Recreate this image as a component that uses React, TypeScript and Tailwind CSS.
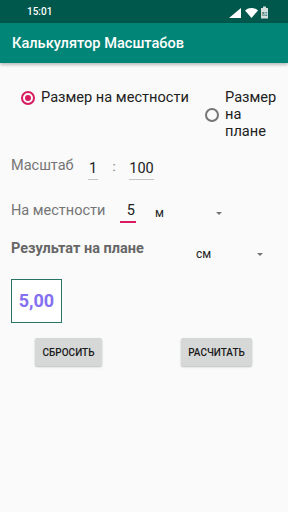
export default function App() {
  return (
    <div className="w-[288px] h-[512px] bg-[#fafafa] overflow-hidden font-['Roboto','Noto_Sans',sans-serif]">
      <div className="h-[23px] bg-[#00574b] flex items-center pl-[27px] pr-[19px]">
        <span className="text-[10px] font-medium text-white leading-none">15:01</span>
        <svg className="ml-auto" width="41" height="23" viewBox="0 0 41 23">
          <path d="M13 8 L13 18 L1 18 Z" fill="#ffffff" />
          <path d="M23.5 18 L17 10.5 A9.9 9.9 0 0 1 30 10.5 Z" fill="#ffffff" />
          <rect x="35" y="6.5" width="3" height="1.5" fill="#d5dfdc" />
          <rect x="33" y="8" width="7" height="10.5" fill="#d5dfdc" />
          <text x="36.5" y="15.5" fontSize="5" textAnchor="middle" fill="#00574b" fontFamily="Roboto, sans-serif">82</text>
        </svg>
      </div>
      <div className="h-[40px] bg-[#008577] flex items-center pl-[12px] shadow-[0_2px_3px_rgba(0,0,0,0.25)] relative">
        <span className="text-[14.6px] font-medium text-white leading-none">Калькулятор Масштабов</span>
      </div>

      <div className="mt-[26px] flex items-start pl-[21px]">
        <div className="flex items-center w-[184px] h-[17px]">
          <div className="w-[14px] h-[14px] rounded-full border-2 border-[#d81b60] flex items-center justify-center">
            <div className="w-[6px] h-[6px] rounded-full bg-[#d81b60]" />
          </div>
          <span className="ml-[6px] text-[14.6px] leading-[17px] text-[#212121] whitespace-nowrap">Размер на местности</span>
        </div>
        <div className="flex items-center">
          <div className="w-[14px] h-[14px] rounded-full border-2 border-[#757575]" />
          <span className="ml-[6px] text-[14.6px] leading-[17px] text-[#212121]">
            Размер
            <br />
            на
            <br />
            плане
          </span>
        </div>
      </div>

      <div className="mt-[16px] flex items-start pl-[11px] h-[24px]">
        <span className="w-[77px] text-[14.5px] leading-[20px] text-[#757575]">Масштаб</span>
        <div className="mt-[3px] w-[10px] border-b-[1.5px] border-[#c4c4c4] text-center text-[14.5px] leading-[20px] text-[#212121]">1</div>
        <div className="mt-[1px] ml-[14px] w-[4px] text-center text-[13px] leading-[20px] text-[#757575]">:</div>
        <div className="mt-[3px] ml-[13px] w-[25px] border-b-[1.5px] border-[#c4c4c4] text-center text-[14.5px] leading-[20px] text-[#212121]">100</div>
      </div>

      <div className="mt-[21px] flex items-start pl-[11px] h-[23px]">
        <span className="w-[109px] text-[14.5px] leading-[20px] text-[#757575]">На местности</span>
        <div className="w-[16px] border-b-2 border-[#d81b60] text-right pr-[1px] text-[14.5px] leading-[20px] text-[#212121]">5</div>
        <div className="ml-[14px] mt-[2px] w-[76px] h-[20px] flex items-center justify-between pl-[5px] pr-[4px]">
          <span className="text-[12px] leading-none text-[#212121]">м</span>
          <svg width="6" height="3" viewBox="0 0 6 3">
            <path d="M0 0 L6 0 L3 3 Z" fill="#757575" />
          </svg>
        </div>
      </div>

      <div className="mt-[15px] flex items-start pl-[11px] h-[25px]">
        <span className="w-[179px] text-[14.5px] leading-[20px] font-bold text-[#666666]">Результат на плане</span>
        <div className="mt-[5px] w-[78px] h-[20px] flex items-center justify-between pl-[6px] pr-[5px]">
          <span className="text-[12px] leading-none text-[#212121]">см</span>
          <svg width="6" height="3" viewBox="0 0 6 3">
            <path d="M0 0 L6 0 L3 3 Z" fill="#757575" />
          </svg>
        </div>
      </div>

      <div className="mt-[15px] ml-[11px] w-[51px] h-[44px] border-[1.5px] border-[#2a7463] bg-white flex items-center justify-center">
        <span className="text-[18px] font-bold leading-none text-[#8470f0]">5,00</span>
      </div>

      <div className="mt-[15px] flex pl-[35px]">
        <div className="w-[67px] h-[28px] bg-[#d6d7d7] rounded-[2px] shadow-[0_1px_2px_rgba(0,0,0,0.25)] flex items-center justify-center text-[10px] font-medium text-[#1a1a1a]">СБРОСИТЬ</div>
        <div className="ml-[79px] w-[71px] h-[28px] bg-[#d6d7d7] rounded-[2px] shadow-[0_1px_2px_rgba(0,0,0,0.25)] flex items-center justify-center text-[10px] font-medium text-[#1a1a1a]">РАСЧИТАТЬ</div>
      </div>
    </div>
  );
}
